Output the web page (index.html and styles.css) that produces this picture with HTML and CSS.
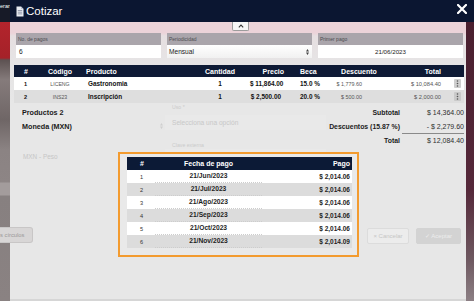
FILE: index.html
```html
<!DOCTYPE html>
<html lang="es">

<head>
    <meta charset="UTF-8">
    <meta name="viewport" content="width=device-width, initial-scale=1.0">
    <title>Cotizar</title>
    <link rel="stylesheet" href="styles.css">
</head>

<body>
    <div class="screen">
        <div class="side side-left">
            <span class="side-btn">erar</span>
        </div>

        <div class="modal-head">
            <div class="modal-title">
                <svg class="title-icon" width="8" height="11" viewBox="0 0 8 11">
                    <path d="M0.5 0.5h4.5l2.5 2.5v7.5h-7z" fill="#e8ebf2" />
                    <path d="M5 0.5v2.5h2.5" fill="#b9c0cf" />
                    <path d="M1.8 4.5h4.4M1.8 6.2h4.4M1.8 7.9h4.4" stroke="#7d879c" stroke-width="0.8" />
                </svg>
                <span>Cotizar</span>
            </div>
            <svg class="close" width="10" height="10" viewBox="0 0 10 10">
                <path d="M1 1L9 9M9 1L1 9" stroke="#fff" stroke-width="2.2" stroke-linecap="square" />
            </svg>
        </div>

        <div class="modal-body">
            <div class="collapse-row">
                <span class="collapse">
                    <svg width="6" height="4" viewBox="0 0 6 4">
                        <path d="M0.8 3.3L3 1.1L5.2 3.3" stroke="#333" stroke-width="1.1" fill="none" />
                    </svg>
                </span>
            </div>

            <div class="fields">
                <div class="field">
                    <div class="field-label">No. de pagos</div>
                    <div class="field-input">6</div>
                </div>
                <div class="field">
                    <div class="field-label">Periodicidad</div>
                    <div class="field-input select">
                        <span>Mensual</span>
                        <svg width="3" height="6" viewBox="0 0 3 6">
                            <path d="M0 2.4L1.5 0L3 2.4zM0 3.6L1.5 6L3 3.6z" fill="#444" />
                        </svg>
                    </div>
                </div>
                <div class="field">
                    <div class="field-label">Primer pago</div>
                    <div class="field-input date">21/06/2023</div>
                </div>
            </div>

            <div class="qt">
                <div class="qt-row qt-head">
                    <span class="c-num">#</span>
                    <span class="c-code">Código</span>
                    <span class="c-prod">Producto</span>
                    <span class="c-qty">Cantidad</span>
                    <span class="c-price">Precio</span>
                    <span class="c-beca">Beca</span>
                    <span class="c-desc">Descuento</span>
                    <span class="c-total">Total</span>
                    <span class="c-act"></span>
                </div>
                <div class="qt-row">
                    <span class="c-num">1</span>
                    <span class="c-code">LICENG</span>
                    <span class="c-prod">Gastronomia</span>
                    <span class="c-qty">1</span>
                    <span class="c-price">$ 11,864.00</span>
                    <span class="c-beca">15.0 %</span>
                    <span class="c-desc">$ 1,779.60</span>
                    <span class="c-total">$ 10,084.40</span>
                    <span class="c-act">
                        <svg class="kebab" width="7" height="9" viewBox="0 0 7 9">
                            <rect width="7" height="9" rx="1" fill="#cecece" />
                            <circle cx="3.5" cy="2" r="0.8" fill="#555" />
                            <circle cx="3.5" cy="4.5" r="0.8" fill="#555" />
                            <circle cx="3.5" cy="7" r="0.8" fill="#555" />
                        </svg>
                    </span>
                </div>
                <div class="qt-row alt">
                    <span class="c-num">2</span>
                    <span class="c-code">INS23</span>
                    <span class="c-prod">Inscripción</span>
                    <span class="c-qty">1</span>
                    <span class="c-price">$ 2,500.00</span>
                    <span class="c-beca">20.0 %</span>
                    <span class="c-desc">$ 500.00</span>
                    <span class="c-total">$ 2,000.00</span>
                    <span class="c-act">
                        <svg class="kebab" width="7" height="9" viewBox="0 0 7 9">
                            <rect width="7" height="9" rx="1" fill="#c9c9c9" />
                            <circle cx="3.5" cy="2" r="0.8" fill="#555" />
                            <circle cx="3.5" cy="4.5" r="0.8" fill="#555" />
                            <circle cx="3.5" cy="7" r="0.8" fill="#555" />
                        </svg>
                    </span>
                </div>
            </div>

            <div class="summary">
                <div class="sum-left">
                    <div class="sum-line">Productos 2</div>
                    <div class="sum-line">
                        <span>Moneda (MXN)</span>
                        <svg width="3" height="6" viewBox="0 0 3 6">
                            <path d="M0 2.4L1.5 0L3 2.4zM0 3.6L1.5 6L3 3.6z" fill="#cfcfcf" />
                        </svg>
                    </div>
                    <div class="faded-text currency">MXN - Peso</div>
                </div>
                <div class="sum-mid">
                    <div class="faded-label">Uso *</div>
                    <div class="faded-select">Selecciona una opción</div>
                    <div class="faded-label key">Clave externa</div>
                    <div class="faded-input"></div>
                </div>
                <div class="sum-right">
                    <div class="tot-row">
                        <span class="tot-label">Subtotal</span>
                        <span class="tot-value">$ 14,364.00</span>
                    </div>
                    <div class="tot-row">
                        <span class="tot-label">Descuentos (15.87 %)</span>
                        <span class="tot-value">- $ 2,279.60</span>
                    </div>
                    <div class="tot-row grand">
                        <span class="tot-label">Total</span>
                        <span class="tot-value">$ 12,084.40</span>
                    </div>
                </div>
            </div>

            <div class="footer">
                <span class="ghost cancel">× Cancelar</span>
                <span class="ghost accept">✓ Aceptar</span>
            </div>
        </div>

        <div class="side side-right"></div>

        <span class="ghost-left">s círculos</span>

        <div class="popup">
            <div class="pt-row pt-head">
                <span class="p-num">#</span>
                <span class="p-date">Fecha de pago</span>
                <span class="p-amount">Pago</span>
            </div>
            <div class="pt-row">
                <span class="p-num">1</span>
                <span class="p-date">21/Jun/2023</span>
                <span class="p-amount">$ 2,014.06</span>
            </div>
            <div class="pt-row alt">
                <span class="p-num">2</span>
                <span class="p-date">21/Jul/2023</span>
                <span class="p-amount">$ 2,014.06</span>
            </div>
            <div class="pt-row">
                <span class="p-num">3</span>
                <span class="p-date">21/Ago/2023</span>
                <span class="p-amount">$ 2,014.06</span>
            </div>
            <div class="pt-row alt">
                <span class="p-num">4</span>
                <span class="p-date">21/Sep/2023</span>
                <span class="p-amount">$ 2,014.06</span>
            </div>
            <div class="pt-row">
                <span class="p-num">5</span>
                <span class="p-date">21/Oct/2023</span>
                <span class="p-amount">$ 2,014.06</span>
            </div>
            <div class="pt-row alt">
                <span class="p-num">6</span>
                <span class="p-date">21/Nov/2023</span>
                <span class="p-amount">$ 2,014.09</span>
            </div>
        </div>
    </div>
</body>

</html>
```

FILE: styles.css
```css
* {
    box-sizing: border-box;
}

body,
html {
    margin: 0;
    padding: 0;
    width: 474px;
    height: 301px;
    overflow: hidden;
    background: #e6e6e6;
    font-family: "Liberation Sans", Arial, sans-serif;
}

.screen {
    position: relative;
    display: grid;
    grid-template-columns: 10px 456px 8px;
    grid-template-rows: 22px 279px;
    width: 474px;
    height: 301px;
}

/* page behind the modal */
.side-left {
    grid-row: 1 / 3;
    grid-column: 1;
    background: linear-gradient(#171a27 0, #171a27 22px, #b3242c 22px, #a52229 58px, #5d5252 60px, #857b7b 80px, #6f6666 120px, #8b8383 150px, #8d8585 182px, #a39c9c 183px, #a39c9c 195px, #878080 196px, #8a8282 301px);
}

.side-btn {
    display: block;
    padding-top: 3px;
    color: #fff;
    font-size: 5.5px;
    line-height: 6px;
    white-space: nowrap;
    overflow: hidden;
}

.side-right {
    grid-row: 2;
    grid-column: 3;
    background: linear-gradient(#4a1f2f, #55283a 60%, #6e5860 85%, #8c7f84);
}

/* header */
.modal-head {
    grid-row: 1;
    grid-column: 2 / 4;
    display: flex;
    align-items: center;
    justify-content: space-between;
    padding: 0 7px 0 6px;
    background: #0b1631;
}

.modal-title {
    display: flex;
    align-items: center;
    gap: 2px;
    color: #fff;
    font-size: 11.5px;
    line-height: 12px;
}

.title-icon {
    display: block;
}

.close {
    display: block;
    margin-top: -4px;
}

/* body */
.modal-body {
    grid-row: 2;
    grid-column: 2;
    border-bottom: 2px solid #d6d6d6;
    background: linear-gradient(#ecd3d9 0, #ecd3d9 11px, #e6dfe1 14px, #e6e4e5 40px, #e7e7e7 80px);
}

.collapse-row {
    display: flex;
    justify-content: center;
    height: 11px;
    padding-left: 5px;
}

.collapse {
    display: flex;
    align-items: center;
    justify-content: center;
    width: 17px;
    height: 9px;
    background: #f6f6f6;
    border: 1px solid #9c9c9c;
    border-top: none;
    border-radius: 0 0 2px 2px;
}

.fields {
    display: grid;
    grid-template-columns: repeat(3, 1fr);
    gap: 6px;
    padding: 0 3px 0 6px;
}

.field-label {
    height: 12px;
    line-height: 12px;
    padding-left: 2px;
    background: #aaa5ab;
    color: #4d4b50;
    font-size: 5px;
}

.field-input {
    height: 13px;
    line-height: 13px;
    padding-left: 3px;
    background: #fff;
    color: #222;
    font-size: 6.6px;
}

.field-input.select {
    display: flex;
    align-items: center;
    justify-content: space-between;
    padding: 0 3px 0 2px;
    background: linear-gradient(#fff, #f1f1f1);
}

.field-input.date {
    text-align: center;
    padding-left: 0;
    font-size: 6.2px;
}

/* products table */
.qt {
    margin: 7px 2px 0 4px;
}

.qt-row {
    display: grid;
    grid-template-columns: 24px 44px 108px 60px 36px 44px 58px 55px 21px;
    align-items: center;
    height: 13px;
    background: #fff;
    color: #111;
    font-size: 6.4px;
    font-weight: bold;
    white-space: nowrap;
}

.qt-row.alt {
    background: #dedede;
}

.qt-head {
    height: 12px;
    background: #0e1a35;
    color: #fff;
    font-size: 7px;
}

.c-num {
    padding-left: 10px;
}

.qt-row .c-num {
    font-size: 5.6px;
}

.qt-head .c-num {
    font-size: 7px;
}

.c-code {
    text-align: center;
}

.qt-row .c-code {
    font-size: 5.2px;
    font-weight: normal;
    color: #555;
}

.qt-head .c-code {
    font-size: 7px;
    font-weight: bold;
    color: #fff;
}

.c-prod {
    padding-left: 6px;
}

.qt-head .c-prod {
    padding-left: 4px;
}

.c-qty {
    text-align: center;
}

.c-price {
    text-align: right;
    padding-right: 5px;
}

.qt-head .c-price {
    padding-right: 2px;
}

.c-beca {
    padding-left: 14px;
}

.c-desc {
    text-align: right;
    padding-right: 26px;
    font-weight: normal;
    font-size: 5.4px;
    color: #555;
}

.qt-head .c-desc {
    text-align: center;
    padding-right: 0;
    font-size: 7px;
    font-weight: bold;
    color: #fff;
}

.c-total {
    text-align: right;
    padding-right: 2px;
    font-weight: normal;
    font-size: 5.7px;
    color: #555;
}

.qt-head .c-total {
    font-size: 7px;
    font-weight: bold;
    color: #fff;
}

.c-act {
    display: flex;
    padding-left: 11px;
}

.kebab {
    display: block;
}

/* totals area */
.summary {
    display: flex;
    margin: 0 2px 0 4px;
    padding-top: 2px;
}

.sum-left {
    width: 151px;
    padding: 0 2px 0 8px;
}

.sum-line {
    display: flex;
    align-items: center;
    justify-content: space-between;
    height: 14px;
    color: #1a1a1a;
    font-size: 7.2px;
    font-weight: bold;
}

.faded-text {
    color: #c6c6c6;
    font-size: 6.4px;
}

.currency {
    margin-top: 17px;
    padding-left: 1px;
    height: 14px;
    line-height: 14px;
}

.sum-mid {
    width: 161px;
    padding: 0 0 0 7px;
}

.faded-label {
    margin-top: -1px;
    height: 6px;
    line-height: 6px;
    color: #cbcbcb;
    font-size: 5.2px;
}

.faded-select {
    margin-top: 5px;
    height: 15px;
    line-height: 15px;
    margin-left: -7px;
    padding-left: 7px;
    color: #c8c8c8;
    font-size: 6.6px;
    background: #e9e9e9;
}

.faded-label.key {
    margin-top: 12px;
}

.faded-input {
    margin: 1px 0 0 -7px;
    height: 14px;
    background: #e9e9e9;
}

.sum-right {
    width: 138px;
}

.tot-row {
    display: grid;
    grid-template-columns: 74px 64px;
    align-items: center;
    height: 14px;
    white-space: nowrap;
}

.tot-label {
    text-align: right;
    color: #1c1c1c;
    font-size: 6.9px;
    font-weight: bold;
}

.tot-value {
    text-align: right;
    color: #2e2e2e;
    font-size: 7px;
}

.tot-row.grand {
    height: 15px;
}

.tot-row.grand .tot-value {
    margin-left: 2px;
    line-height: 14px;
    border-top: 1px solid #8a8a8a;
}

/* faded footer */
.footer {
    display: flex;
    justify-content: flex-end;
    gap: 7px;
    margin-top: 64px;
    padding-right: 5px;
}

.ghost {
    height: 16px;
    line-height: 14px;
    border: 1px solid #dcdcdc;
    border-radius: 2px;
    font-size: 6px;
    text-align: center;
}

.ghost.cancel {
    width: 42px;
    background: #ececec;
    color: #c6c6c6;
}

.ghost.accept {
    width: 45px;
    background: #d3d3d3;
    border-color: #d3d3d3;
    color: #ededed;
}

.ghost-left {
    position: absolute;
    left: 0;
    top: 227px;
    width: 33px;
    height: 16px;
    line-height: 14px;
    border: 1px solid #c8c6c6;
    border-left: none;
    border-radius: 0 3px 3px 0;
    background: #d8d6d6;
    color: #9a9898;
    font-size: 5.8px;
    white-space: nowrap;
    overflow: hidden;
}

/* payment plan overlay */
.popup {
    position: absolute;
    left: 118px;
    top: 152px;
    width: 241px;
    height: 105px;
    padding: 3px 5px 7px 7px;
    border: 2px solid #f39b2f;
    background: #e9e9e9;
}

.pt-row {
    display: grid;
    grid-template-columns: 28px 1fr 90px;
    align-items: center;
    height: 13px;
    background: #fff;
    color: #1e1e1e;
    font-size: 6.7px;
    font-weight: bold;
}

.pt-row.alt {
    background: #dcdcdc;
}

.pt-head {
    background: #0c1a36;
    color: #fff;
    font-size: 7px;
}

.p-num {
    padding-left: 13px;
    font-size: 5.6px;
    font-weight: normal;
    color: #333;
}

.pt-head .p-num {
    font-size: 7px;
    font-weight: bold;
    color: #fff;
}

.p-date {
    text-align: center;
    height: 13px;
    line-height: 12px;
    border-bottom: 1px dotted #cdcdcd;
}

.pt-head .p-date {
    border-bottom: none;
    line-height: 13px;
}

.p-amount {
    text-align: right;
    padding-right: 2px;
    font-size: 6.5px;
}

.pt-head .p-amount {
    font-size: 7px;
}
```
